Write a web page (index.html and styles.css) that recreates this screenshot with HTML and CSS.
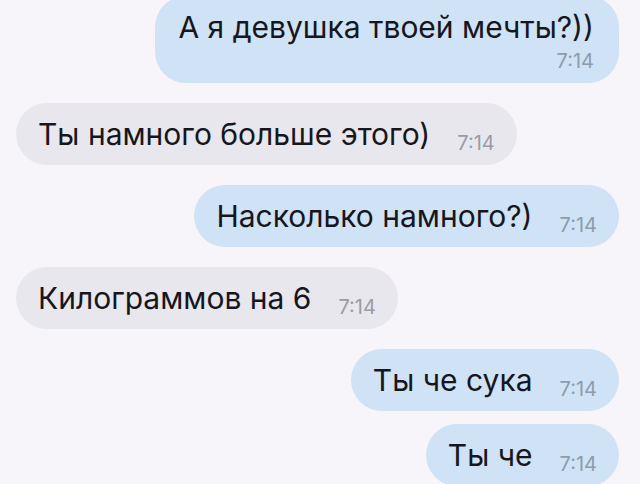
FILE: index.html
```html
<!DOCTYPE html>
<html lang="ru">
<head>
<meta charset="utf-8">
<title>Сообщения</title>
<link rel="stylesheet" href="styles.css">
</head>
<body>
<main class="chat">
  <div class="msg msg--out">
    <div class="bubble bubble--stacked">
      <span class="text">А я девушка твоей мечты?))</span>
      <span class="time">7:14</span>
    </div>
  </div>
  <div class="msg msg--in">
    <div class="bubble">
      <span class="text">Ты намного больше этого)</span>
      <span class="time">7:14</span>
    </div>
  </div>
  <div class="msg msg--out">
    <div class="bubble">
      <span class="text">Насколько намного?)</span>
      <span class="time">7:14</span>
    </div>
  </div>
  <div class="msg msg--in">
    <div class="bubble">
      <span class="text">Килограммов на 6</span>
      <span class="time">7:14</span>
    </div>
  </div>
  <div class="msg msg--out">
    <div class="bubble">
      <span class="text">Ты че сука</span>
      <span class="time">7:14</span>
    </div>
  </div>
  <div class="msg msg--out msg--follow">
    <div class="bubble">
      <span class="text">Ты че</span>
      <span class="time">7:14</span>
    </div>
  </div>
</main>
</body>
</html>
```
FILE: styles.css
```css
html, body {
  margin: 0;
  height: 100%;
}

body {
  background: #f7f5f9;
  font-family: Inter, "Liberation Sans", Arial, sans-serif;
  color: #16161c;
  overflow: hidden;
}

/* the conversation is scrolled so the first bubble is slightly clipped */
.chat {
  display: flex;
  flex-direction: column;
  gap: 20px;
  padding: 0 21px 0 16px;
  margin-top: -4px;
}

.msg {
  display: flex;
}

.msg--out {
  justify-content: flex-end;
}

.msg--in {
  justify-content: flex-start;
}

/* consecutive messages from the same sender sit closer together */
.msg--follow {
  margin-top: -7px;
}

.bubble {
  display: flex;
  align-items: flex-end;
  padding: 15px 22px;
  border-radius: 31px;
}

.msg--out .bubble {
  background: #cfe2f6;
}

.msg--in .bubble {
  background: #e8e7ee;
}

.text {
  font-size: 30px;
  line-height: 32px;
  white-space: nowrap;
}

.time {
  font-size: 20px;
  line-height: 13px;
  margin-left: 27px;
  white-space: nowrap;
}

.msg--out .time {
  color: #8e9bab;
}

.msg--in .time {
  color: #9c9ba4;
}

/* long message: time drops below the text */
.bubble--stacked {
  flex-direction: column;
  align-items: stretch;
  padding: 15px 25px 12px 23px;
}

.bubble--stacked .time {
  align-self: flex-end;
  line-height: 20px;
  margin: 8px 0 0;
}
```
